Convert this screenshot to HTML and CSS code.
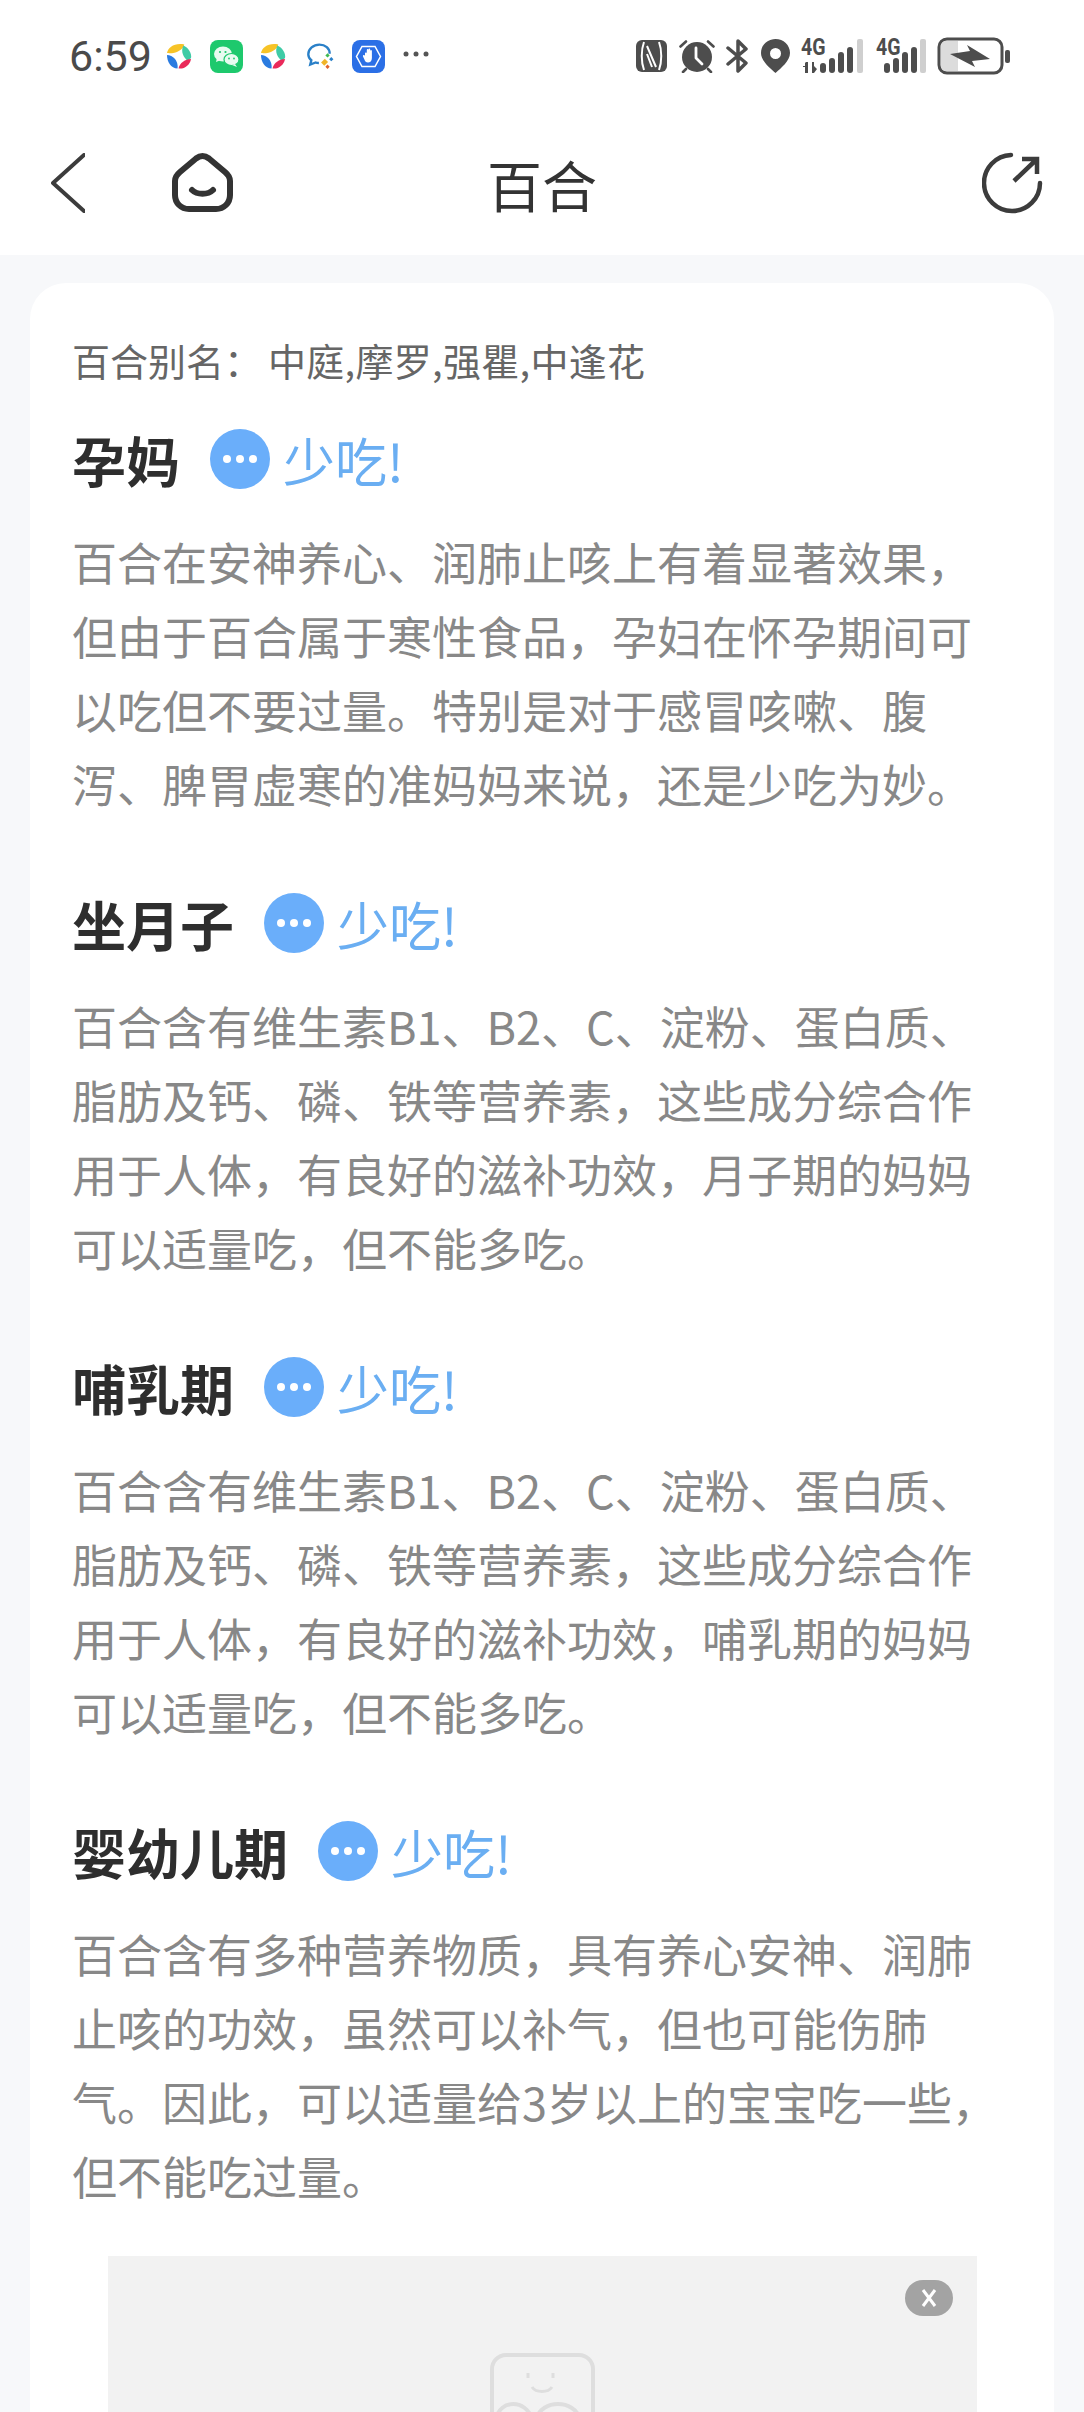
FILE: index.html
```html
<!DOCTYPE html>
<html lang="zh">
<head>
  <meta charset="UTF-8">
  <meta name="viewport" content="width=device-width, initial-scale=1.0">
  <title>百合</title>
  <link rel="stylesheet" href="styles.css">
</head>
<body>
  <div class="top">
    <div class="status-bar">
      <div class="status-left">
        <span class="time">6:59</span>
        <svg class="ic-petal" viewBox="0 0 26 26"><path fill="#f7c326" d="M0 10C1 4 8-1 18 1 17 7 8 11 0 10Z"/><path fill="#3fcba6" d="M17 2C22 4 26 10 25 15L22 18C17 15 14 8 17 2Z"/><path fill="#2a7be0" d="M0 12C6 12 12 18 11 26 4 26 0 19 0 12Z"/><path fill="#ea2a5a" d="M12 26C13 20 19 16 25 16 24 22 18 27 12 26Z"/></svg>
        <svg class="ic-app" viewBox="0 0 33 33"><rect width="33" height="33" rx="8" fill="#1ec96d"/><ellipse cx="13" cy="14" rx="9" ry="7.500" fill="#e8fbf0"/><path fill="#e8fbf0" d="M7 18l-1 4 5-2z"/><ellipse cx="21.500" cy="19.500" rx="7.500" ry="6" fill="#e8fbf0" stroke="#1ec96d" stroke-width="1.200"/><path fill="#e8fbf0" d="M25 24l2 3-5-2z"/><circle cx="10" cy="12" r="1.100" fill="#1ec96d"/><circle cx="15.500" cy="12" r="1.100" fill="#1ec96d"/><circle cx="19" cy="18.500" r=".9" fill="#1ec96d"/><circle cx="24" cy="18.500" r=".9" fill="#1ec96d"/></svg>
        <svg class="ic-petal" viewBox="0 0 26 26"><path fill="#f7c326" d="M0 10C1 4 8-1 18 1 17 7 8 11 0 10Z"/><path fill="#3fcba6" d="M17 2C22 4 26 10 25 15L22 18C17 15 14 8 17 2Z"/><path fill="#2a7be0" d="M0 12C6 12 12 18 11 26 4 26 0 19 0 12Z"/><path fill="#ea2a5a" d="M12 26C13 20 19 16 25 16 24 22 18 27 12 26Z"/></svg>
        <svg class="ic-chat" viewBox="0 0 25 25"><path fill="none" stroke="#2a80c8" stroke-width="2.200" d="M11 18.500C10 18.500 9 18.500 8 18L3 20 4 16C2 14.500 1.200 12.500 1.200 10.500 1.200 5.500 6 1.500 11.500 1.500S21 5 21 10"/><path fill="#f0b429" d="M13 18l3.500-3.500 3 3-3.500 3.500z"/><path fill="#3fb950" d="M17 11.500l2-2 2 2-2 2z"/><path fill="#2a80c8" d="M20.500 15l2-2 2 2-2 2z"/><path fill="#e2622b" d="M17 22l2-2 2 2-2 2z"/></svg>
        <svg class="ic-app" viewBox="0 0 33 33"><rect width="33" height="33" rx="8" fill="#2b6fe6"/><path fill="none" stroke="#fff" stroke-width="1.500" d="M10 6.500H23L28.500 16.500 23 26.500H10L4.500 16.500Z"/><path fill="#fff" d="M13 13.500c0-1.300 1.800-1.300 1.800 0V10c0-1.300 1.700-1.300 1.700 0v-.5c0-1.300 1.700-1.300 1.700 0V11c0-1.200 1.700-1.200 1.700 0v7c0 3-1.800 4.500-3.900 4.500-2 0-3-1.200-3.600-3L11 16.500c-.5-1.300 1-2 1.700-1l.3.500Z"/></svg>
        <svg class="ic-more" viewBox="0 0 26 6"><circle cx="3" cy="3" r="2.500"/><circle cx="13" cy="3" r="2.500"/><circle cx="23" cy="3" r="2.500"/></svg>
      </div>
      <div class="status-right">
        <svg class="ic-nfc" viewBox="0 0 31 32"><rect width="31" height="32" rx="6"/><path fill="none" stroke="#fff" stroke-width="2" d="M8 2C5 10 5 22 8 30M23 2C26 10 26 22 23 30M11 6 20 27M11 14 16 27"/></svg>
        <svg class="ic-alarm" viewBox="0 0 36 34"><circle cx="18" cy="18" r="15"/><path fill="none" stroke="#4d4d4d" stroke-width="2.600" stroke-linecap="round" d="M1.500 7.500 7 2.500M29 2.500 34.500 7.500M7 30 4 33M29 30 32 33"/><path fill="none" stroke="#fff" stroke-width="2.800" stroke-linecap="round" stroke-linejoin="round" d="M17 9V19L23 25"/></svg>
        <svg class="ic-bt" viewBox="0 0 23 34"><path fill="none" stroke="#4d4d4d" stroke-width="3.500" stroke-linejoin="round" stroke-linecap="round" d="M2 9 20 24 12 32V2L20 10 2 25"/></svg>
        <svg class="ic-pin" viewBox="0 0 29 34"><path fill-rule="evenodd" d="M14.500 0C22.500 0 29 6 29 14 29 22 20 29 14.500 34 9 29 0 22 0 14 0 6 6.500 0 14.500 0ZM14.500 9A5.500 5.500 0 1 0 14.500 20 5.500 5.500 0 1 0 14.500 9Z"/></svg>
        <div class="sig sig-a">
          <span class="sig-text">4G</span>
          <svg viewBox="0 0 63 34">
            <path d="M2 27h2v-3l1-1h2v11H4v-6H2zM11 23h2v4l3 3-3 4h-2z"/>
            <rect x="19" y="24" width="6" height="10" rx="3"/><rect x="28" y="19" width="6" height="15" rx="3"/><rect x="37" y="13" width="6" height="21" rx="3"/><rect x="46" y="8" width="6" height="26" rx="3"/>
            <rect class="sig-off" x="56" y="0" width="6" height="34" rx="2"/>
          </svg>
        </div>
        <div class="sig sig-b">
          <span class="sig-text">4G</span>
          <svg viewBox="0 0 50 34">
            <rect x="8" y="24" width="6" height="10" rx="3"/><rect x="17" y="19" width="6" height="15" rx="3"/><rect x="26" y="13" width="6" height="21" rx="3"/><rect x="35" y="8" width="6" height="26" rx="3"/>
            <rect class="sig-off" x="44" y="0" width="6" height="34" rx="2"/>
          </svg>
        </div>
        <svg class="ic-batt" viewBox="0 0 73 38"><rect x="2" y="2" width="63" height="34" rx="8" fill="#fff" stroke="#4d4d4d" stroke-width="3"/><path fill="#dcdcdc" d="M4 9c0-3 2-5 5-5H21V34H9c-3 0-5-2-5-5Z"/><path d="M13 17 33 14 30 8 53 22 35 24 38 30Z"/><rect x="68" y="13" width="5" height="13" rx="2"/></svg>
      </div>
    </div>
    <div class="nav">
      <div class="nav-left">
        <svg class="ic-back" viewBox="0 0 34 60"><path d="M33 2 2 30 33 58"/></svg>
        <svg class="ic-home" viewBox="0 0 61 59"><path d="M30.500 3C33 3 35 4 37 5.500L53 19C56 21.500 58 24 58 28V42C58 50 52 56 44 56H17C9 56 3 50 3 42V28C3 24 5 21.500 8 19L24 5.500C26 4 28 3 30.500 3Z"/><path class="home-mouth" d="M20 37C25 42 36 42 41 37"/></svg>
      </div>
      <h1 class="title">百合</h1>
      <svg class="ic-share" viewBox="0 0 61 62"><path d="M29 3A28 28 0 1 0 58 31"/><path d="M32 29 54 8M40 7H55V22" class="share-arrow"/></svg>
    </div>
  </div>

  <main class="page">
    <div class="card">
      <p class="alias">百合别名：<span class="alias-val">中庭,摩罗,强瞿,中逢花</span></p>

      <section class="block">
        <h2 class="head"><span class="head-name">孕妈</span><span class="dot-badge"><i></i><i></i><i></i></span><span class="head-tip">少吃!</span></h2>
        <p class="desc">百合在安神养心、润肺止咳上有着显著效果，<br>但由于百合属于寒性食品，孕妇在怀孕期间可<br>以吃但不要过量。特别是对于感冒咳嗽、腹<br>泻、脾胃虚寒的准妈妈来说，还是少吃为妙。</p>
      </section>

      <section class="block">
        <h2 class="head"><span class="head-name">坐月子</span><span class="dot-badge"><i></i><i></i><i></i></span><span class="head-tip">少吃!</span></h2>
        <p class="desc">百合含有维生素B1、B2、C、淀粉、蛋白质、<br>脂肪及钙、磷、铁等营养素，这些成分综合作<br>用于人体，有良好的滋补功效，月子期的妈妈<br>可以适量吃，但不能多吃。</p>
      </section>

      <section class="block">
        <h2 class="head"><span class="head-name">哺乳期</span><span class="dot-badge"><i></i><i></i><i></i></span><span class="head-tip">少吃!</span></h2>
        <p class="desc">百合含有维生素B1、B2、C、淀粉、蛋白质、<br>脂肪及钙、磷、铁等营养素，这些成分综合作<br>用于人体，有良好的滋补功效，哺乳期的妈妈<br>可以适量吃，但不能多吃。</p>
      </section>

      <section class="block block-last">
        <h2 class="head"><span class="head-name">婴幼儿期</span><span class="dot-badge"><i></i><i></i><i></i></span><span class="head-tip">少吃!</span></h2>
        <p class="desc">百合含有多种营养物质，具有养心安神、润肺<br>止咳的功效，虽然可以补气，但也可能伤肺<br>气。因此，可以适量给3岁以上的宝宝吃一些，<br>但不能吃过量。</p>
      </section>

      <div class="ad">
        <span class="ad-close">
          <svg viewBox="0 0 18 18"><path d="M3 1 15 17M15 1 3 17"/></svg>
        </span>
        <svg class="ad-pic" viewBox="0 0 105 105"><rect x="2" y="2" width="101" height="101" rx="14"/><path class="pic-face" d="M38 20v5M63 20v5M42 34C46 40 58 40 62 34"/><path d="M6 66C10 46 36 46 42 66M46 66C52 46 84 46 90 66"/></svg>
      </div>
    </div>
  </main>
</body>
</html>
```

FILE: styles.css
```css
* {
  box-sizing: border-box;
}

html, body {
  margin: 0;
  height: 2412px;
  overflow: hidden;
}

body {
  background-color: #f7f8fa;
  font-family: "Noto Sans CJK SC", "Noto Sans", sans-serif;
}

.top {
  background-color: #fff;
  height: 255px;
}

/* status bar */
.status-bar {
  height: 110px;
  padding: 0 74px 0 69px;
  display: flex;
  justify-content: space-between;
  align-items: flex-start;
}

.status-left {
  display: flex;
  align-items: center;
  gap: 18px;
  margin-top: 40px;
  height: 32px;
}

.status-right {
  display: flex;
  align-items: center;
  gap: 11.500px;
  margin-top: 38px;
  height: 36px;
}

.status-right svg {
  fill: #4d4d4d;
  flex: none;
}

.time {
  font-family: Roboto, sans-serif;
  font-size: 43px;
  line-height: 32px;
  width: 80px;
  color: #4a4a4a;
}

.ic-petal { width: 25px; height: 26px; }
.ic-app { width: 33px; height: 33px; }
.ic-chat { width: 27px; height: 27px; margin: 0 0 0 3px; }
.ic-more { width: 26px; height: 6px; fill: #555; margin-top: -4px; }
.ic-nfc { width: 31px; height: 32px; }
.ic-alarm { width: 36px; height: 34px; }
.ic-bt { width: 23px; height: 34px; }
.ic-pin { width: 29px; height: 34px; }
.ic-batt { width: 73px; height: 38px; }

.sig {
  position: relative;
  height: 34px;
  flex: none;
}

.sig-a { width: 63px; }
.sig-b { width: 50px; }

.sig svg {
  display: block;
  width: 100%;
  height: 34px;
}

/* the 4G label sits over the corner of the bars */
.sig-text {
  position: absolute;
  top: 0;
  left: 0;
  font-family: Roboto, sans-serif;
  font-size: 23px;
  line-height: 18px;
  font-weight: 700;
  color: #4d4d4d;
  transform: scaleX(.85);
  transform-origin: left center;
}

.sig-off { fill: #cfcfcf; }

/* nav */
.nav {
  height: 145px;
  padding: 0 41px;
  display: grid;
  grid-template-columns: 1fr auto 1fr;
  align-items: center;
}

.nav-left {
  display: flex;
  align-items: center;
  gap: 87px;
  padding-left: 10px;
}

.ic-back {
  width: 34px;
  height: 60px;
  fill: none;
  stroke: #3c3c3c;
  stroke-width: 4;
  stroke-linecap: round;
  stroke-linejoin: round;
}

.ic-home {
  width: 61px;
  height: 59px;
  fill: none;
  stroke: #333;
  stroke-width: 6;
}

.home-mouth {
  stroke-width: 6;
  stroke-linecap: round;
}

.title {
  margin: 0;
  font-size: 55px;
  font-weight: 400;
  line-height: 60px;
  color: #333;
}

.ic-share {
  width: 61px;
  height: 62px;
  justify-self: end;
  fill: none;
  stroke: #3c3c3c;
  stroke-width: 4.500;
  stroke-linecap: round;
}

.share-arrow {
  stroke-linecap: butt;
}

/* card */
.page {
  padding: 28px 30px 0;
}

.card {
  background-color: #fff;
  border-radius: 36px;
  padding: 52px 0 0 42px;
  height: 2200px;
}

.alias {
  margin: 0 0 44px;
  font-size: 38px;
  line-height: 50px;
  color: #666;
}

.alias-val {
  margin-left: 6px;
  letter-spacing: .3px;
}

.block {
  margin-bottom: 72px;
}

.block-last {
  margin-bottom: 43px;
}

.head {
  margin: 0 0 36px;
  height: 60px;
  display: flex;
  align-items: center;
  font-size: 54px;
  font-weight: 400;
}

.head-name {
  font-weight: 700;
  color: #2e2e2e;
}

.head-tip {
  margin-left: 13px;
  font-size: 52px;
  color: #6aaef2;
}

.dot-badge {
  margin-left: 30px;
  width: 60px;
  height: 60px;
  border-radius: 50%;
  background-color: #6aaefa;
  display: flex;
  align-items: center;
  justify-content: center;
  gap: 5px;
}

.dot-badge i {
  width: 8px;
  height: 8px;
  border-radius: 50%;
  background-color: #fff;
}

.desc {
  margin: 0;
  font-size: 45px;
  line-height: 74px;
  color: #888;
  white-space: nowrap;
}

/* ad placeholder */
.ad {
  position: relative;
  margin-left: 36px;
  width: 869px;
  height: 300px;
  background-color: #f2f2f2;
  display: flex;
  justify-content: center;
  padding-top: 97px;
}

.ad-close {
  position: absolute;
  top: 24px;
  right: 24px;
  width: 48px;
  height: 36px;
  border-radius: 18px;
  background-color: #a3a3a3;
  display: flex;
  align-items: center;
  justify-content: center;
}

.ad-close svg {
  width: 18px;
  height: 18px;
  fill: none;
  stroke: #fff;
  stroke-width: 3;
}

.ad-pic {
  width: 105px;
  height: 105px;
  fill: none;
  stroke: #dedede;
  stroke-width: 4;
}

.pic-face {
  stroke-width: 3;
}
```
